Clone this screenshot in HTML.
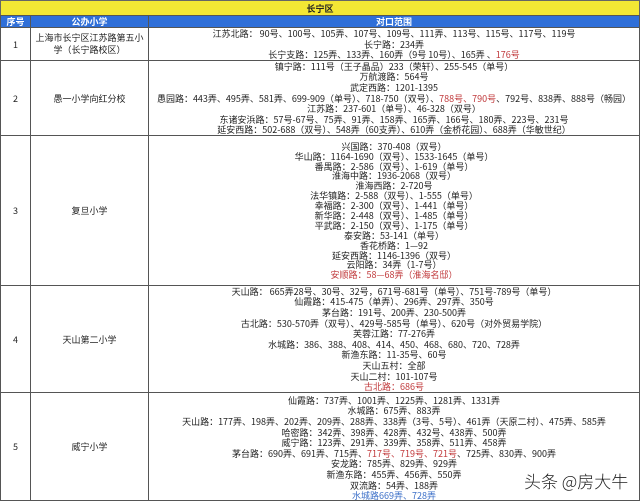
<!DOCTYPE html>
<html><head><meta charset="utf-8"><style>
*{margin:0;padding:0;box-sizing:border-box}
body{width:640px;height:501px;overflow:hidden;background:#fff;font-family:"Noto Sans CJK SC",sans-serif;font-size:9px;color:#222;position:relative}
.c{position:absolute;border:1px solid #555;display:flex;flex-direction:column;justify-content:center;align-items:center;text-align:center;overflow:hidden;white-space:nowrap}
.c>div{overflow:visible;display:flex;align-items:center;justify-content:center}
.l105>div{height:10.5px}.l106>div{height:10.6px}.l99>div{height:9.9px}
.r{color:#c0393b}.b{color:#3b6fc8}
.h{background:#2f6fd8;color:#fff;font-weight:bold}
</style></head><body>
<div class="c" style="left:0;top:0;width:640px;height:16px;background:#f3e734;font-weight:bold;border-color:#666">长宁区</div>
<div class="c h" style="left:0;top:15px;width:31px;height:13px">序号</div>
<div class="c h" style="left:30px;top:15px;width:119px;height:13px">公办小学</div>
<div class="c h" style="left:148px;top:15px;width:492px;height:13px">对口范围</div>

<div class="c" style="left:0;top:27px;width:31px;height:34px">1</div>
<div class="c" style="left:30px;top:27px;width:119px;height:34px;line-height:12px">上海市长宁区江苏路第五小<br>学（长宁路校区）</div>
<div class="c l105" style="left:148px;top:27px;width:492px;height:34px"><div>江苏北路： 90号、100号、105弄、107号、109号、111弄、113号、115号、117号、119号</div><div>长宁路：234弄</div><div>长宁支路：125弄、133弄、160弄（9号 10号）、165弄 、<span class="r">176号</span></div></div>

<div class="c" style="left:0;top:60px;width:31px;height:76px">2</div>
<div class="c" style="left:30px;top:60px;width:119px;height:76px">愚一小学向红分校</div>
<div class="c l106" style="left:148px;top:60px;width:492px;height:76px"><div>镇宁路：111号（王子晶品）233（荣轩）、255-545（单号）</div><div>万航渡路：564号</div><div>武定西路：1201-1395</div><div>愚园路：443弄、495弄、581弄、699-909（单号）、718-750（双号）、<span class="r">788号、790号</span>、792号、838弄、888号（畅园）</div><div>江苏路：237-601（单号）、46-328（双号）</div><div>东诸安浜路：57号-67号、75弄、91弄、158弄、165弄、166号、180弄、223号、231号</div><div>延安西路：502-688（双号）、548弄（60支弄）、610弄（金桥花园）、688弄（华敏世纪）</div></div>

<div class="c" style="left:0;top:135px;width:31px;height:151px">3</div>
<div class="c" style="left:30px;top:135px;width:119px;height:151px">复旦小学</div>
<div class="c l99" style="left:148px;top:135px;width:492px;height:151px"><div>兴国路：370-408（双号）</div><div>华山路：1164-1690（双号）、1533-1645（单号）</div><div>番禺路：2-586（双号）、1-619（单号）</div><div>淮海中路：1936-2068（双号）</div><div>淮海西路：2-720号</div><div>法华镇路：2-588（双号）、1-555（单号）</div><div>幸福路：2-300（双号）、1-441（单号）</div><div>新华路：2-448（双号）、1-485（单号）</div><div>平武路：2-150（双号）、1-175（单号）</div><div>泰安路：53-141（单号）</div><div>香花桥路：1—92</div><div>延安西路：1146-1396（双号）</div><div>云阳路：34弄（1-7号）</div><div class="r">安顺路：58—68弄（淮海名邸）</div></div>

<div class="c" style="left:0;top:285px;width:31px;height:108px">4</div>
<div class="c" style="left:30px;top:285px;width:119px;height:108px">天山第二小学</div>
<div class="c l106" style="left:148px;top:285px;width:492px;height:108px"><div>天山路： 665弄28号、30号、32号，671号-681号（单号）、751号-789号（单号）</div><div>仙霞路：415-475（单弄）、296弄、297弄、350号</div><div>茅台路：191号、200弄、230-500弄</div><div>古北路：530-570弄（双号）、429号-585号（单号）、620号（对外贸易学院）</div><div>芙蓉江路：77-276弄</div><div>水城路：386、388、408、414、450、468、680、720、728弄</div><div>新渔东路：11-35号、60号</div><div>天山五村：全部</div><div>天山二村：101-107号</div><div class="r">古北路：686号</div></div>

<div class="c" style="left:0;top:392px;width:31px;height:109px">5</div>
<div class="c" style="left:30px;top:392px;width:119px;height:109px">威宁小学</div>
<div class="c l106" style="left:148px;top:392px;width:492px;height:109px;justify-content:flex-start;padding-top:2px"><div>仙霞路：737弄、1001弄、1225弄、1281弄、1331弄</div><div>水城路：675弄、883弄</div><div>天山路：177弄、198弄、202弄、209弄、288弄、338弄（3号、5号）、461弄（天原二村）、475弄、585弄</div><div>哈密路：342弄、398弄、428弄、432号、438弄、500弄</div><div>威宁路：123弄、291弄、339弄、358弄、511弄、458弄</div><div>茅台路：690弄、691弄、715弄、<span class="r">717号、719号、721号</span>、725弄、830弄、900弄</div><div>安龙路：785弄、829弄、929弄</div><div>新渔东路：455弄、456弄、550弄</div><div>双流路：54弄、188弄</div><div class="b">水城路669弄、728弄</div></div>
<div style="position:absolute;left:524px;top:468px;font-size:17px;color:#222;white-space:nowrap;font-family:'Noto Sans CJK SC',sans-serif;font-weight:300">头条 @房大牛</div>
</body></html>
